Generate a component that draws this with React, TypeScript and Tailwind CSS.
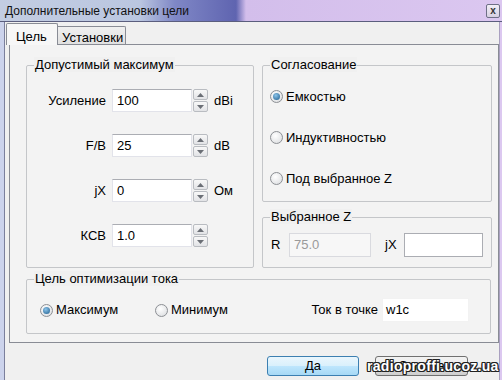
import React from "react";

function Radio({ checked }: { checked?: boolean }) {
  return (
    <span className="w-[13px] h-[13px] rounded-full border border-[#8c8f94] bg-[radial-gradient(circle_at_40%_35%,#ffffff,#d8dadd)] flex items-center justify-center shrink-0">
      {checked && (
        <span className="w-[7px] h-[7px] rounded-full bg-[radial-gradient(circle_at_40%_35%,#8cc4ea,#1d5c8c)]" />
      )}
    </span>
  );
}

function Spinner() {
  return (
    <div className="ml-[1px] w-[15px] h-[23px] flex flex-col justify-between">
      <div className="h-[11px] border border-[#b9bcc1] rounded-[2px] bg-[linear-gradient(#f8f8f8,#e2e3e6)] flex items-center justify-center">
        <svg width="7" height="4" viewBox="0 0 7 4">
          <path d="M0 4 L3.5 0 L7 4 Z" fill="#6b6f76" />
        </svg>
      </div>
      <div className="h-[11px] border border-[#b9bcc1] rounded-[2px] bg-[linear-gradient(#f8f8f8,#e2e3e6)] flex items-center justify-center">
        <svg width="7" height="4" viewBox="0 0 7 4">
          <path d="M0 0 L3.5 4 L7 0 Z" fill="#6b6f76" />
        </svg>
      </div>
    </div>
  );
}

function NumRow({ label, value, unit }: { label: string; value: string; unit?: string }) {
  return (
    <div className="flex items-center h-[23px]">
      <span className="w-[79px] text-right">{label}</span>
      <div className="ml-[6px] w-[80px] h-[23px] bg-white border border-[#e2e3ea] border-t-[#abadb3] pl-[4px] flex items-center">
        {value}
      </div>
      <Spinner />
      {unit && <span className="ml-[6px]">{unit}</span>}
    </div>
  );
}

function Group({ title, className, children }: { title: string; className: string; children: React.ReactNode }) {
  return (
    <div className={"relative border border-[#c4c6c9] rounded-[2px] " + className}>
      <span className="absolute -top-[9px] left-[7px] px-[1px] bg-[#f0f0f0] leading-[15px]">{title}</span>
      {children}
    </div>
  );
}

export default function App() {
  return (
    <div className="w-[502px] h-[380px] overflow-hidden relative flex flex-col bg-[#f0f0f0] font-['Liberation_Sans',Arial,sans-serif] text-[13px] text-black">
      <div className="h-[22px] shrink-0 flex items-center border-b border-[#5b5e7e] bg-[linear-gradient(to_right,#c3cde2_0px,#bac6e0_140px,#7f87c6_175px,#5f64b0_236px,#d3beeb_246px,#dbc7f0_502px)] pl-[5px] pr-[2px]">
        <span className="text-[12px] text-[#111]">Дополнительные установки цели</span>
        <div className="ml-auto w-[14px] h-[14px] border border-[#6e6f86] rounded-[2px] bg-[linear-gradient(#f2eef7,#d7d0e2)] flex items-center justify-center text-[10px] leading-none text-[#333] font-bold">
          x
        </div>
      </div>

      <div className="flex flex-1">
        <div className="w-[5px] bg-[#ccd3ec] border-r border-[#7b7f9c]" />
        <div className="flex-1 flex flex-col">
          <div className="flex items-end mt-[1px] ml-[1px] h-[21px] relative z-10">
            <div className="h-[22px] -mb-px w-[52px] pl-[9px] pt-[3px] bg-[#f7f7f7] border border-b-0 border-[#898c95] rounded-t-[2px]">
              Цель
            </div>
            <div className="h-[18px] w-[68px] pl-[4px] pt-[1px] bg-[linear-gradient(#f0f0f0,#e0e0e0)] border border-b-0 border-l-0 border-[#898c95] rounded-tr-[2px]">
              Установки
            </div>
          </div>

          <div className="ml-[4px] h-[299px] border border-[#898c95] bg-[#f3f3f3] pt-[20px] pl-[16px] pr-[6px] flex flex-col">
            <div className="flex gap-[8px]">
              <Group title="Допустимый максимум" className="w-[228px] h-[203px] pt-[23px] flex flex-col gap-[22px]">
                <NumRow label="Усиление" value="100" unit="dBi" />
                <NumRow label="F/B" value="25" unit="dB" />
                <NumRow label="jX" value="0" unit="Ом" />
                <NumRow label="КСВ" value="1.0" />
              </Group>

              <div className="flex flex-col">
                <Group title="Согласование" className="w-[230px] h-[137px] pt-[23px] pl-[7px] flex flex-col gap-[26px]">
                  <div className="flex items-center h-[15px] gap-[3px]">
                    <Radio checked />
                    <span>Емкостью</span>
                  </div>
                  <div className="flex items-center h-[15px] gap-[3px]">
                    <Radio />
                    <span>Индуктивностью</span>
                  </div>
                  <div className="flex items-center h-[15px] gap-[3px]">
                    <Radio />
                    <span>Под выбранное Z</span>
                  </div>
                </Group>

                <Group title="Выбранное Z" className="mt-[15px] w-[230px] h-[51px] pt-[15px] pl-[8px]">
                  <div className="flex items-center h-[24px]">
                    <span className="w-[18px]">R</span>
                    <div className="w-[82px] h-[24px] border border-[#d9dadf] bg-[#f7f7f7] pl-[4px] flex items-center text-[#9a9a9a]">
                      75.0
                    </div>
                    <span className="ml-[14px] w-[19px]">jX</span>
                    <div className="w-[79px] h-[24px] border border-[#abadb3] bg-white" />
                  </div>
                </Group>
              </div>
            </div>

            <Group title="Цель оптимизации тока" className="mt-[11px] w-[465px] h-[55px] pt-[18px] pl-[13px] pr-[21px]">
              <div className="flex items-center h-[24px]">
                <div className="w-[115px] flex items-center gap-[3px]">
                  <Radio checked />
                  <span>Максимум</span>
                </div>
                <div className="flex items-center gap-[3px]">
                  <Radio />
                  <span>Минимум</span>
                </div>
                <span className="ml-auto">Ток в точке</span>
                <div className="ml-[4px] w-[87px] h-[24px] bg-white border border-[#f2f2f2] pl-[3px] flex items-center">
                  w1c
                </div>
              </div>
            </Group>
          </div>

          <div className="flex justify-end gap-[16px] pr-[31px] mt-[13px]">
            <button className="w-[92px] h-[20px] rounded-[3px] border border-[#3c7fb1] bg-[linear-gradient(#eaf6fd_0%,#d9f0fc_50%,#bee6fd_51%,#a7d9f5_100%)] flex items-center justify-center">
              Да
            </button>
            <button className="w-[93px] h-[20px] rounded-[3px] border border-[#707070] bg-[linear-gradient(#f2f2f2_0%,#ebebeb_50%,#dddddd_51%,#cfcfcf_100%)] flex items-center justify-center">
              Отмена
            </button>
          </div>
        </div>
        <div className="w-[3px] bg-[#dcc8f0] border-l border-[#a9a0c0]" />
      </div>

      <span className="absolute left-[367px] top-[356px] text-[14px] font-bold tracking-[0.3px] text-white [text-shadow:-1px_-1px_0_#222,1px_-1px_0_#222,-1px_1px_0_#222,1px_1px_0_#222,0_1px_0_#222,0_-1px_0_#222,1px_0_0_#222,-1px_0_0_#222]">
        radioproffi.ucoz.ua
      </span>
    </div>
  );
}
